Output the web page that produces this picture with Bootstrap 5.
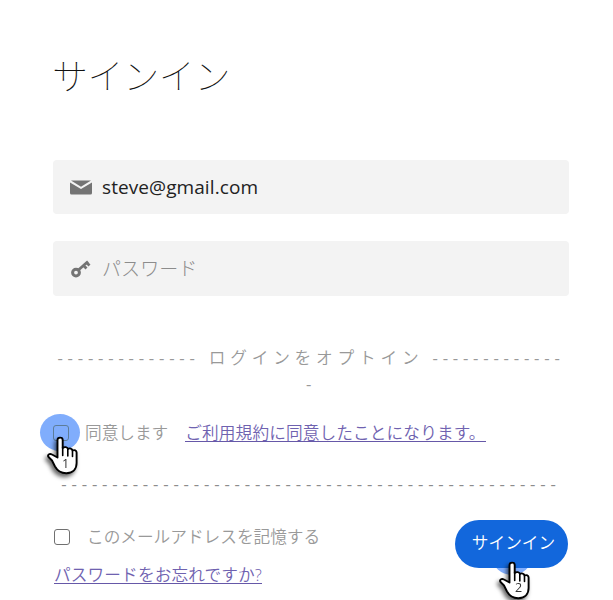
<!DOCTYPE html>
<html lang="ja">
<head>
<meta charset="utf-8">
<meta name="viewport" content="width=device-width, initial-scale=1">
<title>サインイン</title>
<link href="https://cdn.jsdelivr.net/npm/bootstrap@5.3.0/dist/css/bootstrap.min.css" rel="stylesheet">
<style>
body{font-family:"Open Sans","Noto Sans CJK JP",sans-serif;font-size:16.67px;font-weight:350;color:#999;background:#fff;overflow:hidden}
.signin{width:516px;margin-left:53px;height:600px;padding-top:50px}
.signin h1{font-size:36px;line-height:54px;font-weight:100;color:#111;margin:0 0 56px -1px;letter-spacing:-.4px}
.field{height:54px;background:#f3f3f3;border-radius:4px;padding-left:17px;gap:9px}
.field + .field{margin-top:27px;height:55px}
.field svg{width:23px;height:20px;flex:none}
.field input{font-size:19px;font-weight:400;color:#222;padding:0;line-height:28px;height:30px;letter-spacing:.08px}
.field input::placeholder{color:#8c8c8c;font-weight:300;opacity:1}
.rule{letter-spacing:4.8px;line-height:26px;height:52px;margin-top:49px;color:#999;white-space:nowrap}
.terms{height:26px;line-height:26px;margin-top:23px}
.signin .form-check-input{width:16px;height:16px;margin:0;border:1.5px solid #707070;border-radius:3px;flex:none}
.terms .form-check-input{background:#80adfc;border-color:#5d7d98}
.spot{position:relative;width:16px;height:16px;flex:none}
.halo{position:absolute;left:-13px;top:-11px;width:40px;height:37px;border-radius:50%;background:#80adfc}
.spot .form-check-input{position:relative;display:block}
.cursor{position:absolute;width:40px;height:46px;overflow:visible;z-index:3;filter:drop-shadow(-2px 3px 2px rgba(0,0,0,.6))}
.cursor text{font:400 12.5px "Open Sans",sans-serif;fill:#333;letter-spacing:0}
.spot .cursor{left:-7px;top:10px}
.agree{margin:0 17px 0 16px}
.signin a{color:#6f62b0;text-decoration:none;border-bottom:1px solid #6658a8;display:inline-block;line-height:20px;height:19px;white-space:nowrap;letter-spacing:.12px}
.terms a{position:relative;top:-1px}
.second{height:26px;line-height:26px;margin-top:25px;text-align:center;white-space:nowrap;letter-spacing:4.83px;color:#8c8c8c}
.bottom{margin-top:22px}
.remember{height:26px;line-height:26px;margin-top:5px;padding-left:1px;gap:17px}
.forgot{margin-top:15px;line-height:20px;padding-left:1px}
.enter{width:113px;height:48px;font-size:16.67px;font-weight:350;background:#1267dc;color:#fff;border:0;padding:0 0 2px 4px;position:relative;z-index:2}
.enter-wrap{position:relative;margin-right:1px;padding-top:.5px}
.enter-wrap .halo{left:37px;top:19px;width:40px;height:37px}
.enter-wrap .cursor{left:43px;top:41px}
.dash{font-weight:500}
</style>
<script src="https://cdn.jsdelivr.net/npm/bootstrap@5.3.0/dist/js/bootstrap.bundle.min.js" defer></script>
</head>
<body>
<svg class="d-none" xmlns="http://www.w3.org/2000/svg">
<symbol id="hand" viewBox="0 0 40 46"><path d="M11.500 22.500V5C11.500 1.800 16.700 1.800 16.700 5V13C18.500 11.500 21.600 12 21.800 14 23.500 12.800 26.300 13.500 26.500 15.500 28.500 14.500 30.600 15.500 30.600 17.500V28C30.600 34 27 38 20.500 38.200 15 38.300 11.500 36 9 31.500L6 25.500 2.500 22C1 19.800 3.500 18.300 6 19.500Z" fill="#fff" stroke="#000" stroke-width="1.900" stroke-linejoin="round"/><path d="M16.700 12v8.500M21.800 14v7M26.500 15.500v6" fill="none" stroke="#000" stroke-width="1.600" stroke-linecap="round"/></symbol>
</svg>
<main class="signin">
<h1>サインイン</h1>
<form>
<div class="field d-flex align-items-center"><svg viewBox="0 0 23 20"><path d="M0 5.500 11 12 22 5.500V16q0 1.500-1.500 1.500H1.500Q0 17.500 0 16Z" fill="#747474"/><path d="M1 3.500H21L11 9.800Z" fill="#747474"/></svg><input class="form-control border-0 bg-transparent shadow-none" type="text" value="steve@gmail.com" aria-label="メール"></div>
<div class="field d-flex align-items-center"><svg viewBox="0 0 23 20"><circle cx="6" cy="13.600" r="3.400" fill="none" stroke="#747474" stroke-width="3"/><path d="M8.700 10.800 18 2.500M13.500 6.500l3 3M16.500 3.500l3 3" fill="none" stroke="#747474" stroke-width="2.800"/></svg><input class="form-control border-0 bg-transparent shadow-none" type="text" placeholder="パスワード"></div>
<div class="rule text-center"><span class="dash">--------------</span> ログインをオプトイン <span class="dash">-------------<br>-</span></div>
<div class="terms d-flex align-items-center"><span class="spot"><i class="halo"></i><input class="form-check-input" type="checkbox" aria-label="同意します"><svg class="cursor" viewBox="0 0 40 46"><use href="#hand"/><text x="16" y="33">1</text></svg></span><span class="agree text-nowrap">同意します</span><a href="#">ご利用規約に同意したことになります。</a></div>
<div class="second dash">-------------------------------------------------</div>
<div class="bottom d-flex justify-content-between">
<div><label class="remember d-flex align-items-center text-nowrap"><input class="form-check-input" type="checkbox">このメールアドレスを記憶する</label><div class="forgot"><a href="#">パスワードをお忘れですか?</a></div></div>
<div class="enter-wrap"><i class="halo"></i><button class="btn enter rounded-pill" type="button">サインイン</button><svg class="cursor" viewBox="0 0 40 46"><use href="#hand"/><text x="17" y="32">2</text></svg></div>
</div>
</form>
</main>
</body>
</html>
